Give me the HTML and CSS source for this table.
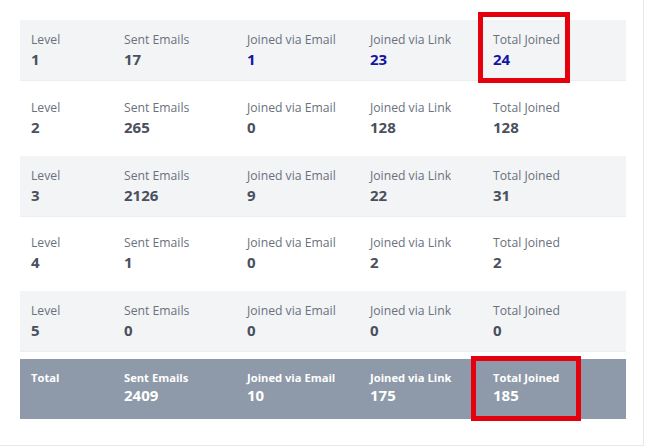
FILE: index.html
```html
<!DOCTYPE html>
<html>
<head>
<meta charset="utf-8">
<link rel="stylesheet" href="styles.css">
</head>
<body>
<div class="card">
  <div class="rows">
    <div class="row shaded">
      <div class="cell"><div class="lbl">Level</div><div class="val">1</div></div>
      <div class="cell"><div class="lbl">Sent Emails</div><div class="val">17</div></div>
      <div class="cell"><div class="lbl">Joined via Email</div><div class="val blue">1</div></div>
      <div class="cell"><div class="lbl">Joined via Link</div><div class="val blue">23</div></div>
      <div class="cell"><div class="lbl">Total Joined</div><div class="val blue">24</div></div>
      <div class="mark mark-top"></div>
    </div>
    <div class="row">
      <div class="cell"><div class="lbl">Level</div><div class="val">2</div></div>
      <div class="cell"><div class="lbl">Sent Emails</div><div class="val">265</div></div>
      <div class="cell"><div class="lbl">Joined via Email</div><div class="val">0</div></div>
      <div class="cell"><div class="lbl">Joined via Link</div><div class="val">128</div></div>
      <div class="cell"><div class="lbl">Total Joined</div><div class="val">128</div></div>
    </div>
    <div class="row shaded">
      <div class="cell"><div class="lbl">Level</div><div class="val">3</div></div>
      <div class="cell"><div class="lbl">Sent Emails</div><div class="val">2126</div></div>
      <div class="cell"><div class="lbl">Joined via Email</div><div class="val">9</div></div>
      <div class="cell"><div class="lbl">Joined via Link</div><div class="val">22</div></div>
      <div class="cell"><div class="lbl">Total Joined</div><div class="val">31</div></div>
    </div>
    <div class="row">
      <div class="cell"><div class="lbl">Level</div><div class="val">4</div></div>
      <div class="cell"><div class="lbl">Sent Emails</div><div class="val">1</div></div>
      <div class="cell"><div class="lbl">Joined via Email</div><div class="val">0</div></div>
      <div class="cell"><div class="lbl">Joined via Link</div><div class="val">2</div></div>
      <div class="cell"><div class="lbl">Total Joined</div><div class="val">2</div></div>
    </div>
    <div class="row shaded">
      <div class="cell"><div class="lbl">Level</div><div class="val">5</div></div>
      <div class="cell"><div class="lbl">Sent Emails</div><div class="val">0</div></div>
      <div class="cell"><div class="lbl">Joined via Email</div><div class="val">0</div></div>
      <div class="cell"><div class="lbl">Joined via Link</div><div class="val">0</div></div>
      <div class="cell"><div class="lbl">Total Joined</div><div class="val">0</div></div>
    </div>
    <div class="row total">
      <div class="cell"><div class="lbl">Total</div></div>
      <div class="cell"><div class="lbl">Sent Emails</div><div class="val">2409</div></div>
      <div class="cell"><div class="lbl">Joined via Email</div><div class="val">10</div></div>
      <div class="cell"><div class="lbl">Joined via Link</div><div class="val">175</div></div>
      <div class="cell"><div class="lbl">Total Joined</div><div class="val">185</div></div>
      <div class="mark mark-bottom"></div>
    </div>
  </div>
</div>
</body>
</html>
```
FILE: styles.css
```css
html, body {
  margin: 0;
  padding: 0;
  background: #ffffff;
}
body {
  font-family: "Open Sans", "Noto Sans", sans-serif;
}
.card {
  width: 643px;
  height: 445px;
  border-right: 1px solid #e6e8eb;
  border-bottom: 1px solid #e6e8eb;
  background: #ffffff;
}
.rows {
  padding: 20px 0 0 20px;
  width: 606px;
  display: flex;
  flex-direction: column;
  gap: 7.8px;
}
.row {
  position: relative;
  height: 60px;
  box-sizing: border-box;
  padding: 11px 0 0 11px;
  display: grid;
  grid-template-columns: 93px 123px 123px 123px 1fr;
}
.row.shaded {
  background: #f3f4f6;
  box-shadow: 0 1px 0 #eceef1;
}
.lbl {
  font-size: 12.2px;
  line-height: 18px;
  color: #6a717d;
  white-space: nowrap;
}
.val {
  font-size: 15px;
  line-height: 20px;
  font-weight: 700;
  color: #4a505c;
}
.val.blue {
  color: #1414a3;
}
.row.total {
  background: #8e99a9;
}
.row.total .lbl {
  font-size: 11.2px;
  line-height: 16px;
  font-weight: 700;
  color: #ffffff;
}
.row.total .val {
  line-height: 18px;
  color: #ffffff;
}
.mark {
  position: absolute;
  border: 5px solid #e5000d;
  box-sizing: border-box;
}
.mark-top {
  left: 458px;
  top: -8px;
  width: 92px;
  height: 71px;
}
.mark-bottom {
  left: 451px;
  top: -3px;
  width: 110px;
  height: 65px;
}
```
